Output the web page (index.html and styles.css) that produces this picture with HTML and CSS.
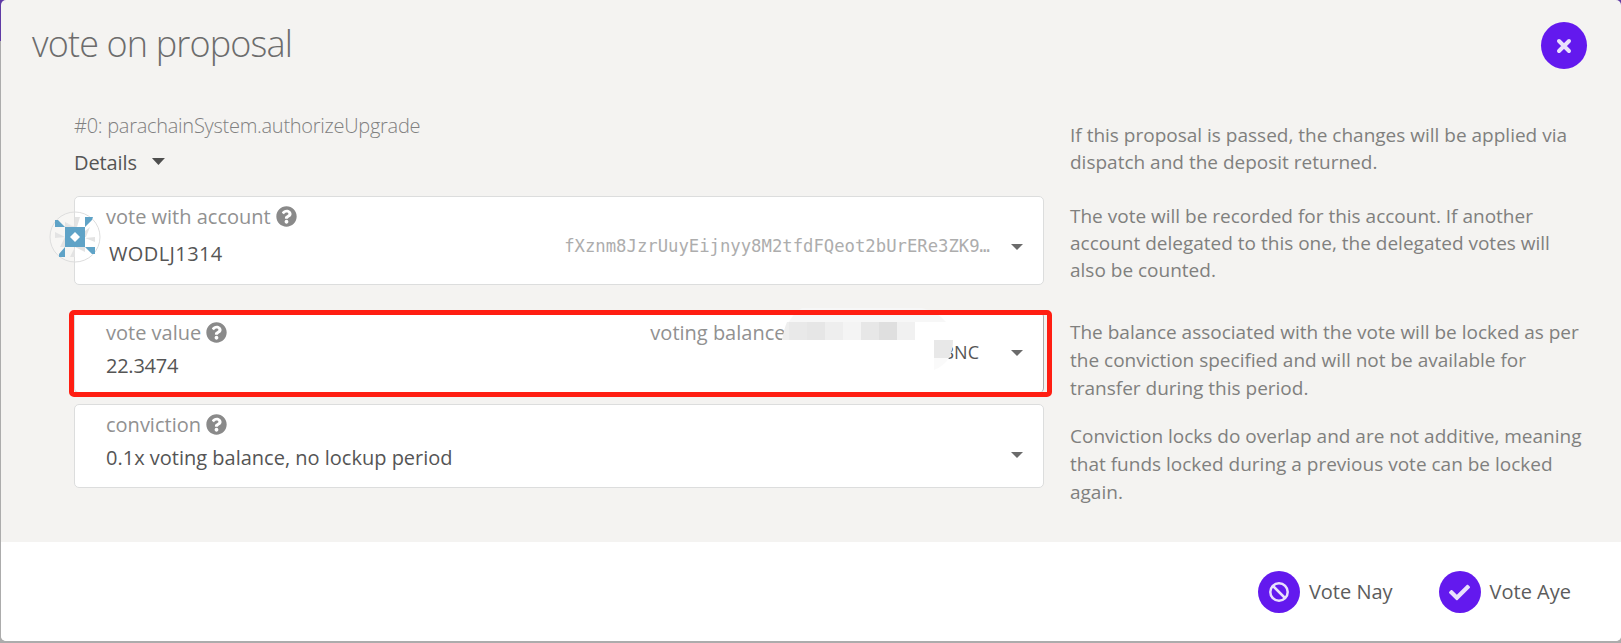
FILE: index.html
```
<!DOCTYPE html>
<html lang="en">
<head>
<meta charset="utf-8">
<title>vote on proposal</title>
<link rel="stylesheet" href="styles.css">
</head>
<body>
<svg width="0" height="0" class="defs">
  <symbol id="help" viewBox="0 0 512 512"><path d="M504 256c0 137-111 248-248 248S8 393 8 256 119 8 256 8s248 111 248 248zM262.700 90c-54.500 0-89.300 23-116.500 63.800-3.500 5.300-2.400 12.400 2.700 16.300l34.700 26.300c5.200 3.900 12.600 3 16.700-2.100 17.900-22.700 30.100-35.800 57.300-35.800 20.400 0 45.700 13.100 45.700 33 0 15-12.400 22.700-32.500 34C247.100 238.500 216 254.900 216 296v4c0 6.600 5.400 12 12 12h56c6.600 0 12-5.400 12-12v-1.300c0-28.500 83.200-29.600 83.200-106.700 0-58-60.200-102-116.500-102zM256 338c-25.400 0-46 20.600-46 46s20.600 46 46 46 46-20.600 46-46-20.600-46-46-46z"/></symbol>
</svg>
<div class="modal">
  <header class="header">
    <h1>vote on proposal</h1>
    <button class="round close" aria-label="Close"><svg viewBox="0 0 16 16" width="16" height="16"><path d="M3 3l10 10M13 3L3 13" stroke="currentColor" stroke-width="4" stroke-linecap="round"/></svg></button>
  </header>
  <main class="content">
    <section class="proposal">
      <div class="call">#0: parachainSystem.authorizeUpgrade</div>
      <div class="details">Details<i class="caret big"></i></div>
    </section>
    <p class="hint h1">If this proposal is passed, the changes will be applied via<br>dispatch and the deposit returned.</p>

    <section class="field account">
      <svg class="identicon" viewBox="0 0 52 52" width="52" height="52">
        <circle cx="26" cy="26" r="25" fill="#fff" fill-opacity=".25" stroke="#ddd"/>
        <path d="M25.500 1v50" stroke="#dcdddd"/>
        <g fill="#e3e3e3"><path d="M26 6h5l-3 10-13-4 11 4zM26 6h5l-4 10h-2zM16 11l10 5H16zM41 16l-4 10h-1V20zM6 21l10 5-10 1zM46 31V26l-10 1zM11 36l5-10v10zM36 36v5l-10-5zM26 36v10h-5z"/></g>
        <g fill="#5fa3c7"><path d="M16 16h20v20H16z"/><path d="M6 16V9h3l7 7zM36 16V6h8l-1 3zM36 36h10v7h-3zM16 36v10h-6v-3z"/></g>
        <path d="M26 21l5 5-5 5-5-5z" fill="#fff"/>
      </svg>
      <div class="main"><div class="label">vote with account <svg class="q"><use href="#help"/></svg></div><div class="value name">WODLJ1314</div></div>
      <div class="address">fXznm8JzrUuyEijnyy8M2tfdFQeot2bUrERe3ZK9…</div>
      <i class="caret"></i>
    </section>
    <p class="hint h2">The vote will be recorded for this account. If another<br>account delegated to this one, the delegated votes will<br>also be counted.</p>

    <section class="field amount">
      <div class="main"><div class="label">vote value <svg class="q"><use href="#help"/></svg></div><div class="value number">22.3474</div></div>
      <div class="balance">voting balance</div>
      <div class="unit">BNC</div>
      <i class="caret"></i>
      <svg class="mosaic" viewBox="0 0 180 62" width="180" height="62">
        <path d="M0 32Q6 8 20 0h120q16 4 24 14v18z" fill="#f7f7f7"/>
        <path d="M133 14h35v18h-35zM0 32h152v20H0z" fill="#fff"/>
        <path d="M0 32Q2 21 5 14h3v18z" fill="#eee"/>
        <path d="M7 14h18v18H7z" fill="#e9e9e9"/><path d="M25 14h18v18H25z" fill="#e6e6e6"/>
        <path d="M43 14h18v18H43z" fill="#eee"/><path d="M61 14h18v18H61z" fill="#f4f4f4"/>
        <path d="M79 14h18v18H79z" fill="#e7e7e7"/><path d="M97 14h18v18H97z" fill="#dfdfdf"/><path d="M115 14h18v18h-18z" fill="#f1f1f1"/>
        <path d="M152 32h19q0 10-4 18h-15z" fill="#e8e8e8"/><path d="M152 50h15q-5 8-15 12z" fill="#fafafa"/>
      </svg>
      <div class="highlight"></div>
    </section>
    <p class="hint h3">The balance associated with the vote will be locked as per<br>the conviction specified and will not be available for<br>transfer during this period.</p>

    <section class="field conviction">
      <div class="main"><div class="label">conviction <svg class="q"><use href="#help"/></svg></div><div class="value">0.1x voting balance, no lockup period</div></div>
      <i class="caret"></i>
    </section>
    <p class="hint h4">Conviction locks do overlap and are not additive, meaning<br>that funds locked during a previous vote can be locked<br>again.</p>
  </main>
  <footer class="footer">
    <button class="action"><span class="round"><svg viewBox="0 0 20 20" width="20" height="20"><circle cx="10" cy="10" r="8.700" fill="none" stroke="currentColor" stroke-width="2.500"/><path d="M4 4l12 12" stroke="currentColor" stroke-width="2.500"/></svg></span>Vote Nay</button>
    <button class="action"><span class="round"><svg viewBox="0 0 512 512" width="21" height="21"><path fill="currentColor" d="M173.900 439.400l-166.400-166.400c-10-10-10-26.200 0-36.200l36.200-36.200c10-10 26.200-10 36.200 0L192 312.700 432.100 72.600c10-10 26.200-10 36.200 0l36.200 36.200c10 10 10 26.200 0 36.200l-294.400 294.400c-10 10-26.200 10-36.200 0z"/></svg></span>Vote Aye</button>
  </footer>
</div>
</body>
</html>
```
FILE: styles.css
```
* { box-sizing: border-box; }
body {
  margin: 0;
  height: 643px;
  padding: 0 0 2px 1px;
  overflow: hidden;
  background: linear-gradient(#5f3aa5 41px, #acacac 41px);
  font: 20px/28px "Open Sans", "Noto Sans", sans-serif;
  color: #555;
}
.defs { position: absolute; }
h1, p { margin: 0; }
button { border: 0; padding: 0; background: none; font: inherit; color: inherit; }

.modal {
  height: 641px;
  border-radius: 5px;
  overflow: hidden;
  background: #f4f3f1;
  display: flex;
  flex-direction: column;
}
.header {
  height: 112px;
  padding: 20px 34px 0 31px;
  display: flex;
  justify-content: space-between;
  align-items: flex-start;
}
h1 {
  font-size: 36px;
  line-height: 48px;
  font-weight: 300;
  letter-spacing: -0.85px;
  color: #6c6c6c;
}
.round {
  width: 42px;
  height: 42px;
  border-radius: 50%;
  background: #6319ee;
  color: #e9e0fc;
  display: flex;
  align-items: center;
  justify-content: center;
}
.close { width: 46px; height: 47px; margin-top: 2px; }

.content {
  height: 430px;
  padding-left: 73px;
  display: grid;
  grid-template-columns: 970px 1fr;
  grid-template-rows: 84px 116px 92px 1fr;
  column-gap: 26px;
  align-items: start;
}
.call { font-weight: 300; letter-spacing: -0.27px; color: #808080; }
.details { margin-top: 9px; display: flex; align-items: center; letter-spacing: -0.1px; }
.caret {
  width: 12px;
  height: 6px;
  background: #6b6b6b;
  clip-path: polygon(0 0, 100% 0, 50% 100%);
  flex: none;
}
.caret.big { width: 13px; height: 7px; margin: 0 0 3px 15px; background: #4e4e4e; }

.field {
  position: relative;
  display: flex;
  align-items: flex-start;
  padding: 0 20px 0 31px;
  border: 1px solid #dcdddd;
  border-radius: 5px;
  background: #fff;
}
.account { height: 89px; }
.amount { height: 81px; border-right-color: #aaa; }
.conviction { height: 84px; }
.main { flex: 1; padding-top: 6px; }
.label { display: flex; align-items: center; gap: 5px; color: #919191; white-space: nowrap; }
.q { width: 21px; height: 21px; margin-bottom: 1px; fill: #8a8a8a; }
.value { margin-top: 5px; }
.number { letter-spacing: -0.25px; }
.name { margin: 9px 0 0 3px; letter-spacing: 0.4px; }
.identicon { position: absolute; left: -26px; top: 14px; }
.address {
  font: 17.25px/20px "DejaVu Sans Mono", monospace;
  color: #adadad;
  margin-right: 21px;
  padding-top: 39px;
}
.account .caret { margin-top: 47px; }
.amount .caret { margin-top: 37px; }
.conviction .caret { margin-top: 47px; }
.balance { padding-top: 6px; color: #919191; margin-right: 157px; }
.unit { font-size: 18px; padding-top: 25px; margin-right: 32px; }
.mosaic { position: absolute; left: 707px; top: -5px; }
.highlight {
  position: absolute;
  left: -6px;
  top: -3px;
  width: 983px;
  height: 87px;
  border: 5px solid #ff1e12;
  border-radius: 5px;
}

.hint { font-size: 19px; line-height: 27px; color: #80807e; white-space: nowrap; }
.h1 { padding-top: 10px; }
.h2 { padding-top: 7px; }
.h3, .h4 { line-height: 28px; }
.h3 { padding-top: 6px; }
.h4 { padding-top: 18px; }

.footer {
  flex: 1;
  background: #fff;
  display: flex;
  justify-content: flex-end;
  align-items: center;
  gap: 46px;
  padding: 1px 50px 0 0;
}
.action { display: flex; align-items: center; gap: 9px; line-height: 26px; padding-top: 0; color: #5c5c5c; }
.action .round { flex: none; }
```
